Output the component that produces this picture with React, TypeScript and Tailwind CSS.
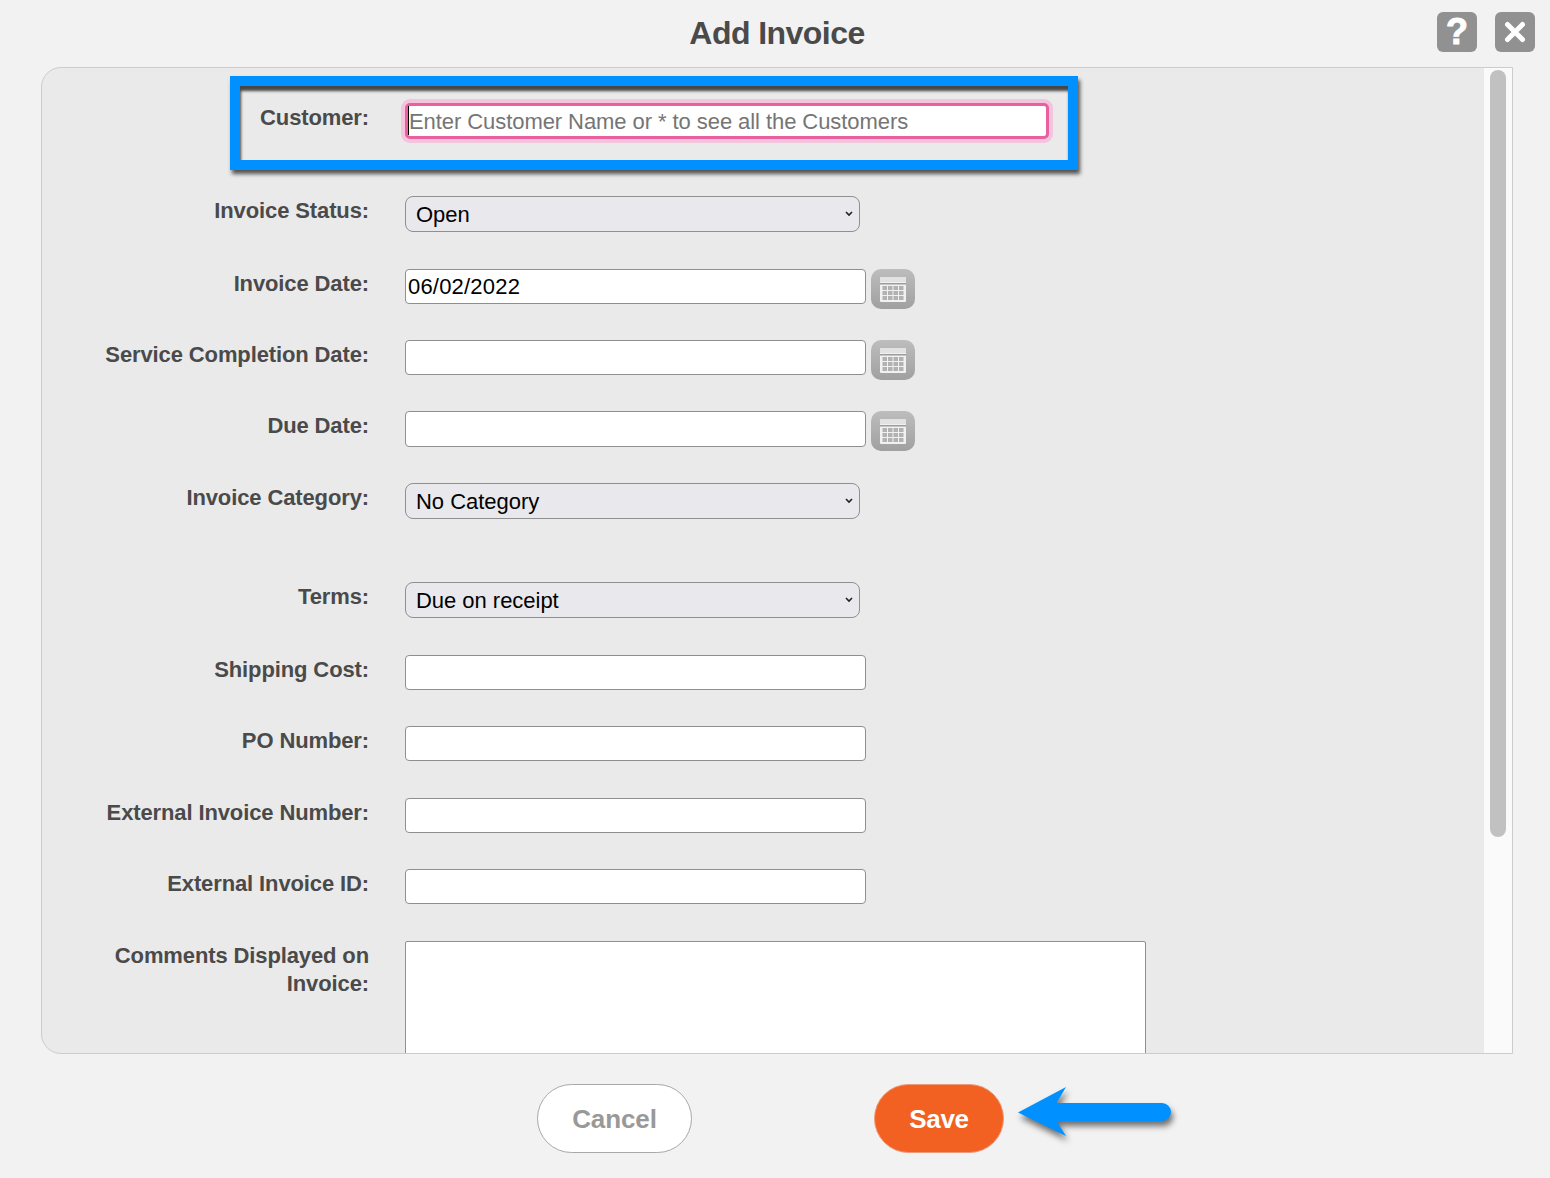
import React from "react";

const font = "font-['Liberation_Sans',Arial,sans-serif]";

function Label({ children }: { children: React.ReactNode }) {
  return (
    <div className="w-[327px] shrink-0 mr-[36px] text-right text-[22px] leading-[28px] font-bold text-[#4a4a4a] tracking-[-0.12px] mt-[1px]">
      {children}
    </div>
  );
}

function TextInput({ value }: { value?: string }) {
  return (
    <input
      readOnly
      value={value ?? ""}
      className="w-[461px] h-full bg-white border border-[#8f8f8f] rounded-[4px] px-[2px] text-[22px] tracking-[0.2px] text-black outline-none"
    />
  );
}

function Select({ value }: { value: string }) {
  return (
    <div className="relative w-[455px] h-full">
      <select
        defaultValue={value}
        className="w-full h-full appearance-none bg-[#e9e9ed] border border-[#8f8f8f] rounded-[8px] pl-[10px] text-[22px] tracking-[-0.03px] text-black outline-none"
      >
        <option>{value}</option>
      </select>
      <svg
        className="absolute right-[6px] top-[14px] pointer-events-none"
        width="10"
        height="8"
        viewBox="0 0 10 8"
        fill="none"
        stroke="#222"
        strokeWidth="1.6"
      >
        <path d="M2 2l3 3 3-3" />
      </svg>
    </div>
  );
}

function CalendarButton() {
  return (
    <div className="ml-[5px] w-[44px] h-[40px] shrink-0 rounded-[10px] bg-gradient-to-b from-[#bdbdbd] to-[#a0a0a0] flex items-center justify-center">
      <svg width="28" height="28" viewBox="0 0 28 28">
        <rect x="1" y="2" width="26" height="25" rx="1" fill="#f1f1f1" />
        <rect x="1" y="2" width="26" height="5" fill="#e2e2e2" />
        <rect x="1" y="8" width="26" height="1.5" fill="#9c9c9c" />
        <g fill="#b2b2b2">
          <rect x="3.500" y="11" width="4.500" height="4" />
          <rect x="9" y="11" width="4.500" height="4" />
          <rect x="14.500" y="11" width="4.500" height="4" />
          <rect x="20" y="11" width="4.500" height="4" />
          <rect x="3.500" y="16" width="4.500" height="4" />
          <rect x="9" y="16" width="4.500" height="4" />
          <rect x="14.500" y="16" width="4.500" height="4" />
          <rect x="20" y="16" width="4.500" height="4" />
          <rect x="3.500" y="21" width="4.500" height="4" />
          <rect x="9" y="21" width="4.500" height="4" />
          <rect x="14.500" y="21" width="4.500" height="4" />
          <rect x="20" y="21" width="4.500" height="4" />
        </g>
      </svg>
    </div>
  );
}

export default function App() {
  return (
    <div className={`${font} relative w-[1550px] h-[1178px] overflow-hidden bg-[#f2f2f2]`}>
      {/* Header */}
      <div className="relative h-[67px] flex items-center justify-center pl-[4px] pb-[2px]">
        <h1 className="text-[32px] font-bold text-[#4a4a4a] tracking-[-0.55px]">Add Invoice</h1>
        <div className="absolute left-[1437px] top-[12px] flex gap-[18px]">
          <div className="w-[40px] h-[40px] rounded-[6px] bg-[#919191] flex items-center justify-center text-white text-[36px] font-bold [-webkit-text-stroke:1px_white]">
            ?
          </div>
          <div className="w-[40px] h-[40px] rounded-[6px] bg-[#919191] flex items-center justify-center">
            <svg width="24" height="24" viewBox="0 0 24 24" stroke="#fff" strokeWidth="5" strokeLinecap="round">
              <path d="M4.500 4.500l15 15M19.500 4.500l-15 15" />
            </svg>
          </div>
        </div>
      </div>

      {/* Form panel */}
      <div className="ml-[41px] w-[1472px] h-[987px] flex border border-[#cccccc] rounded-l-[20px] bg-[#eaeaea] overflow-hidden">
        <div className="flex-1 overflow-hidden">
          <div className="flex h-[36px] mt-[35px]">
            <Label>Customer:</Label>
            <div className="relative w-[644px] h-full">
              <input
                readOnly
                placeholder="Enter Customer Name or * to see all the Customers"
                className="w-full h-full bg-white border-[3px] border-[#e8609f] rounded-[5px] pl-[1px] pt-[2px] text-[22px] tracking-[-0.07px] outline-none shadow-[0_0_0_4px_#f4c4dc] placeholder:text-[#757575]"
              />
              <span className="absolute left-[3px] top-[3px] w-[1px] h-[29px] bg-black" />
            </div>
          </div>
          <div className="flex h-[36px] mt-[57px]">
            <Label>Invoice Status:</Label>
            <Select value="Open" />
          </div>
          <div className="flex h-[35px] mt-[37px]">
            <Label>Invoice Date:</Label>
            <TextInput value="06/02/2022" />
            <CalendarButton />
          </div>
          <div className="flex h-[35px] mt-[36px]">
            <Label>Service Completion Date:</Label>
            <TextInput />
            <CalendarButton />
          </div>
          <div className="flex h-[36px] mt-[36px]">
            <Label>Due Date:</Label>
            <TextInput />
            <CalendarButton />
          </div>
          <div className="flex h-[36px] mt-[36px]">
            <Label>Invoice Category:</Label>
            <Select value="No Category" />
          </div>
          <div className="flex h-[36px] mt-[63px]">
            <Label>Terms:</Label>
            <Select value="Due on receipt" />
          </div>
          <div className="flex h-[35px] mt-[37px]">
            <Label>Shipping Cost:</Label>
            <TextInput />
          </div>
          <div className="flex h-[35px] mt-[36px]">
            <Label>PO Number:</Label>
            <TextInput />
          </div>
          <div className="flex h-[35px] mt-[37px]">
            <Label>External Invoice Number:</Label>
            <TextInput />
          </div>
          <div className="flex h-[35px] mt-[36px]">
            <Label>External Invoice ID:</Label>
            <TextInput />
          </div>
          <div className="flex h-[160px] mt-[37px]">
            <Label>Comments Displayed on Invoice:</Label>
            <textarea
              readOnly
              className="w-[741px] h-full bg-white border border-[#8f8f8f] rounded-[2px] outline-none resize-none"
            />
          </div>
        </div>
        {/* Scrollbar */}
        <div className="w-[28px] shrink-0 bg-[#fafafa] pt-[2px]">
          <div className="ml-[6px] w-[16px] h-[767px] rounded-[8px] bg-[#c1c1c1]" />
        </div>
      </div>

      {/* Footer buttons */}
      <div className="flex mt-[30px] ml-[537px]">
        <button className="w-[155px] h-[69px] rounded-[35px] bg-white border border-[#a8a8a8] pt-[2px] text-[26px] tracking-[-0.1px] font-bold text-[#999999]">
          Cancel
        </button>
        <button className="ml-[182px] w-[130px] h-[69px] rounded-[35px] bg-[#f26122] border border-[#eb9a7c] pt-[2px] text-[26px] tracking-[-0.3px] font-bold text-white">
          Save
        </button>
      </div>

      {/* Annotation: frame round the customer field */}
      <div className="absolute left-[230px] top-[76px] w-[848px] h-[94px] border-[10px] border-[#0090ff] pointer-events-none shadow-[2px_4px_4px_rgba(0,0,0,0.65),inset_1px_5px_3px_rgba(0,0,0,0.7)]" />

      {/* Annotation: arrow pointing at Save */}
      <svg
        className="absolute left-[1009px] top-[1078px] drop-shadow-[2px_5px_3px_rgba(0,0,0,0.55)]"
        width="175"
        height="70"
        viewBox="0 0 175 70"
      >
        <path
          d="M9 34.500L57 9L47.500 25H153A8.500 8.500 0 0 1 153 43H47.500L57 58Z"
          fill="#0090ff"
        />
      </svg>
    </div>
  );
}
